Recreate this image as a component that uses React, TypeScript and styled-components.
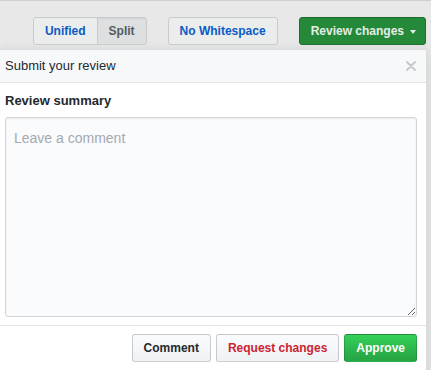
import styled, { createGlobalStyle, css } from "styled-components";

const GlobalStyle = createGlobalStyle`
  * { box-sizing: border-box; }
  body {
    margin: 0;
    background: #e8e8e8;
    font-family: "Liberation Sans", Arial, sans-serif;
    color: #24292e;
  }
`;

const Page = styled.div`
  height: 370px;
  overflow: hidden;
  border-top: 1px solid #cfcfcf;
`;

const Toolbar = styled.div`
  display: flex;
  justify-content: flex-end;
  align-items: center;
  gap: 21px;
  padding: 16px 5px 4px 0;
`;

const ButtonGroup = styled.div`
  display: flex;
`;

type Variant = "default" | "selected" | "primary" | "dimPrimary" | "dim";

const Button = styled.button<{ $variant?: Variant; $color?: string }>`
  display: inline-flex;
  align-items: center;
  height: 28px;
  padding: 3px 11px;
  font-family: inherit;
  font-size: 12px;
  font-weight: 700;
  line-height: 20px;
  border: 1px solid rgba(27, 31, 35, 0.2);
  border-radius: 3px;
  color: ${(p) => p.$color || "#24292e"};
  background-image: linear-gradient(-180deg, #fafbfc 0%, #eff3f6 90%);
  cursor: pointer;

  ${(p) =>
    p.$variant === "dim" &&
    css`
      background: #ebecec;
      border-color: #c9cacb;
    `}
  ${(p) =>
    p.$variant === "selected" &&
    css`
      background: #dedfe0;
      border-color: #c9cacb;
      box-shadow: inset 0 1px 1px rgba(27, 31, 35, 0.06);
    `}
  ${(p) =>
    p.$variant === "primary" &&
    css`
      color: #fff;
      background-image: linear-gradient(-180deg, #34d058 0%, #28a745 90%);
    `}
  ${(p) =>
    p.$variant === "dimPrimary" &&
    css`
      color: #e4ede6;
      background: #25893a;
      border-color: #1f6e31;
      padding-left: 11px;
      padding-right: 9px;
    `}
`;

const GroupButton = styled(Button)<{ $first?: boolean }>`
  border-radius: ${(p) => (p.$first ? "3px 0 0 3px" : "0 3px 3px 0")};
  margin-left: ${(p) => (p.$first ? "0" : "-1px")};
`;

const Caret = styled.span`
  display: inline-block;
  margin-left: 6px;
  margin-top: 2px;
  border-top: 4px solid currentColor;
  border-left: 3.5px solid transparent;
  border-right: 3.5px solid transparent;
`;

const Panel = styled.div`
  width: 427px;
  background: #fff;
  border: 1px solid rgba(27, 31, 35, 0.15);
  border-left: none;
  border-radius: 0 3px 0 0;
  box-shadow: 0 3px 12px rgba(27, 31, 35, 0.15);
`;

const PanelHeader = styled.div`
  display: flex;
  align-items: center;
  justify-content: space-between;
  height: 33px;
  padding: 0 10px 0 5px;
  background: #f6f8fa;
  border-bottom: 1px solid #e1e4e8;
  font-size: 13px;
  line-height: 16px;
`;

const CloseIcon = styled.svg`
  width: 10px;
  height: 10px;
  color: #c3c8cd;
`;

const PanelBody = styled.div`
  padding: 8px 9px 8px 5px;
`;

const Label = styled.div`
  font-size: 13px;
  font-weight: 700;
  line-height: 20px;
  margin-bottom: 6px;
`;

const CommentBox = styled.textarea`
  display: block;
  width: 100%;
  height: 200px;
  padding: 10px 8px;
  font-family: inherit;
  font-size: 14px;
  line-height: 20px;
  color: #24292e;
  background: #fafbfc;
  border: 1px solid #d1d5da;
  border-radius: 3px;
  box-shadow: inset 0 1px 2px rgba(27, 31, 35, 0.075);
  outline: none;

  &::placeholder {
    color: #a3aab1;
  }
`;

const PanelFooter = styled.div`
  display: flex;
  justify-content: flex-end;
  gap: 5px;
  padding: 8px 9px 12px 5px;
  border-top: 1px solid #e1e4e8;
`;

export default function App() {
  return (
    <>
      <GlobalStyle />
      <Page>
        <Toolbar>
          <ButtonGroup>
            <GroupButton $first $variant="dim" $color="#0a5bc4">
              Unified
            </GroupButton>
            <GroupButton $variant="selected" $color="#555b62">
              Split
            </GroupButton>
          </ButtonGroup>
          <Button $variant="dim" $color="#0a5bc4">
            No Whitespace
          </Button>
          <Button $variant="dimPrimary">
            Review changes
            <Caret />
          </Button>
        </Toolbar>
        <Panel>
          <PanelHeader>
            <span>Submit your review</span>
            <CloseIcon viewBox="0 0 10 10">
              <path
                d="M1 1L9 9M9 1L1 9"
                stroke="currentColor"
                strokeWidth="1.8"
                strokeLinecap="round"
              />
            </CloseIcon>
          </PanelHeader>
          <PanelBody>
            <Label>Review summary</Label>
            <CommentBox placeholder="Leave a comment" />
          </PanelBody>
          <PanelFooter>
            <Button>Comment</Button>
            <Button $color="#cb2431">Request changes</Button>
            <Button $variant="primary">Approve</Button>
          </PanelFooter>
        </Panel>
      </Page>
    </>
  );
}
